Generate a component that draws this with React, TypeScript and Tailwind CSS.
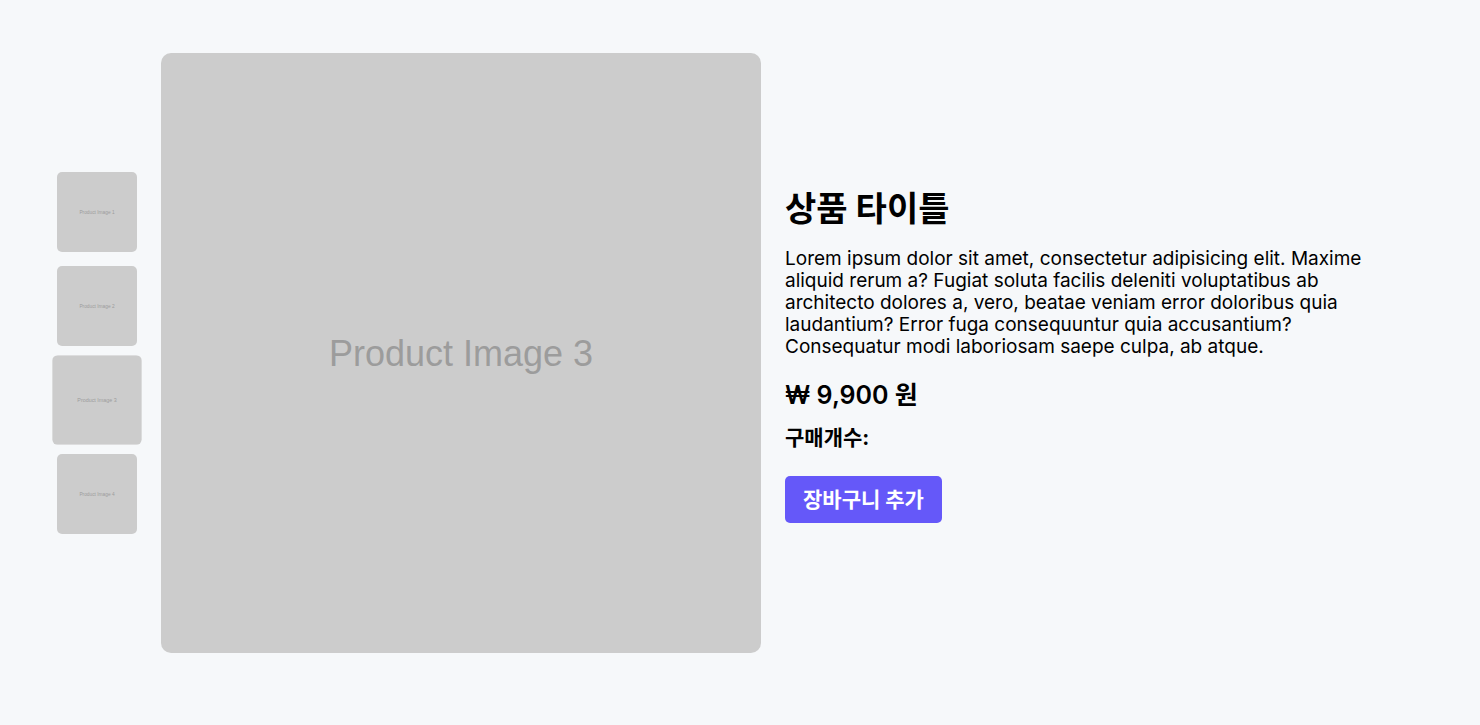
import { useState } from 'react'

interface ProductImage {
  id: number
  label: string
}

const PRODUCT_IMAGES: ProductImage[] = [
  { id: 1, label: 'Product Image 1' },
  { id: 2, label: 'Product Image 2' },
  { id: 3, label: 'Product Image 3' },
  { id: 4, label: 'Product Image 4' },
]

function PlaceholderImage({ label }: { label: string }) {
  return (
    <svg viewBox="0 0 600 600" role="img" aria-label={label} className="block h-auto w-full">
      <rect width="600" height="600" fill="#cccccc" />
      <text
        x="300"
        y="313"
        textAnchor="middle"
        fontSize="36"
        fill="#9c9c9c"
        className="font-['Liberation_Sans',sans-serif]"
      >
        {label}
      </text>
    </svg>
  )
}

interface ThumbnailListProps {
  selectedId: number
  onSelect: (id: number) => void
}

function ThumbnailList({ selectedId, onSelect }: ThumbnailListProps) {
  return (
    <ul className="flex w-20 shrink-0 flex-col gap-3.5">
      {PRODUCT_IMAGES.map((image) => (
        <li key={image.id}>
          <button
            type="button"
            onClick={() => onSelect(image.id)}
            className={`block w-full cursor-pointer overflow-hidden rounded-[5px] ${
              image.id === selectedId ? 'scale-112' : ''
            }`}
          >
            <PlaceholderImage label={image.label} />
          </button>
        </li>
      ))}
    </ul>
  )
}

function ProductInfo() {
  return (
    <section className="flex max-w-[580px] flex-1 flex-col items-start">
      <h1 className="text-[34px] leading-[50px] font-bold">상품 타이틀</h1>
      <p className="mt-3.5 text-[19px] leading-[22px]">
        Lorem ipsum dolor sit amet, consectetur adipisicing elit. Maxime aliquid rerum a? Fugiat
        soluta facilis deleniti voluptatibus ab architecto dolores a, vero, beatae veniam error
        doloribus quia laudantium? Error fuga consequuntur quia accusantium? Consequatur modi
        laboriosam saepe culpa, ab atque.
      </p>
      <p className="mt-5 text-[25px] leading-[34px] font-semibold">₩ 9,900 원</p>
      <p className="mt-3 text-[21px] leading-7 font-bold">구매개수:</p>
      <button
        type="button"
        className="mt-6 cursor-pointer rounded-[5px] bg-[#6558f9] px-[18px] py-2.5 text-[21px] leading-[27px] font-bold text-white"
      >
        장바구니 추가
      </button>
    </section>
  )
}

export default function App() {
  const [selectedId, setSelectedId] = useState(3)
  const selected = PRODUCT_IMAGES.find((image) => image.id === selectedId) ?? PRODUCT_IMAGES[0]

  return (
    <main className="min-h-screen bg-[#f6f8fa] px-[57px] py-[53px] font-['Inter','Noto_Sans_CJK_KR',sans-serif] text-black">
      <div className="flex items-center gap-6">
        <ThumbnailList selectedId={selectedId} onSelect={setSelectedId} />
        <div className="max-w-[600px] flex-1 overflow-hidden rounded-[10px]">
          <PlaceholderImage label={selected.label} />
        </div>
        <ProductInfo />
      </div>
    </main>
  )
}
